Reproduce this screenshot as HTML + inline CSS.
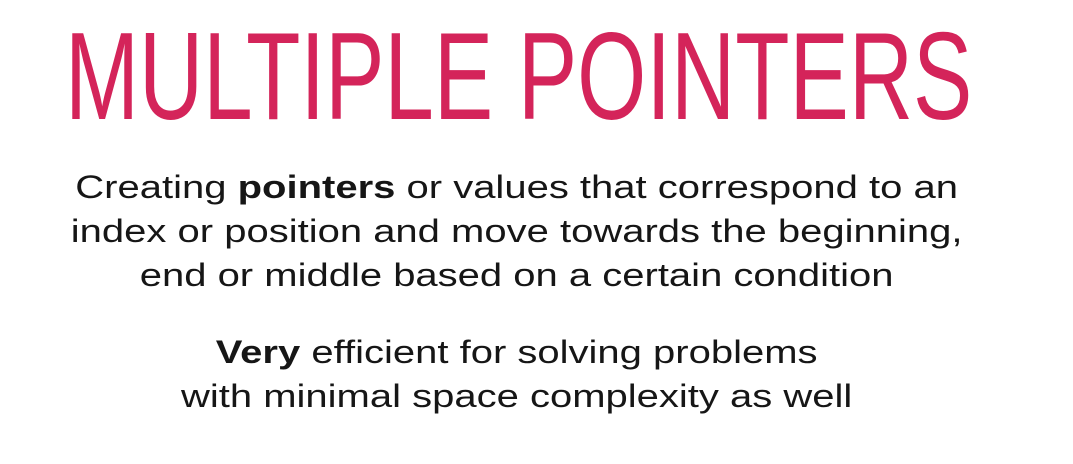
<!DOCTYPE html>
<html><head><style>
html,body{margin:0;padding:0;background:#fff;width:1073px;height:464px;overflow:hidden}
.t{position:absolute;left:65px;top:15px;font-family:"Liberation Sans",sans-serif;font-size:124px;color:#d4245a;white-space:nowrap;transform:scaleX(0.717);transform-origin:0 0;line-height:124px}
.p{position:absolute;left:0;width:1033px;text-align:center;font-family:"Liberation Sans",sans-serif;font-size:32px;color:#161616;line-height:44px;transform:scaleX(1.25);transform-origin:516px 0}
b{font-weight:bold}
</style></head><body>
<div class="t">MULTIPLE POINTERS</div>
<div class="p" style="top:165px">Creating <b>pointers</b> or values that correspond to an<br>index or position and move towards the beginning,<br>end or middle based on a certain condition</div>
<div class="p" style="top:330px"><b>Very</b> efficient for solving problems<br>with minimal space complexity as well</div>
</body></html>
